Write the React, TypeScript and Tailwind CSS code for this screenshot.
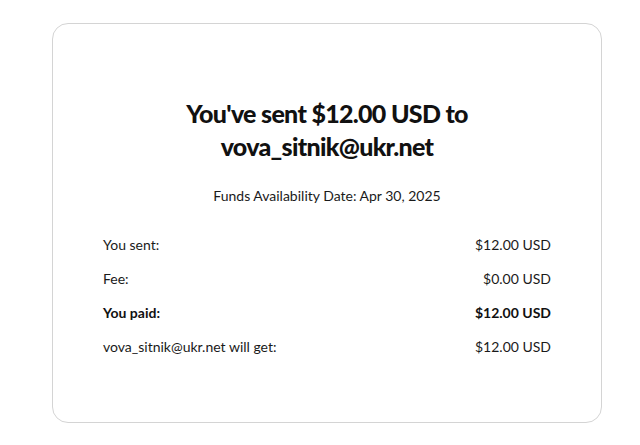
import React from "react";

const rows = [
  { label: "You sent:", value: "$12.00 USD", bold: false },
  { label: "Fee:", value: "$0.00 USD", bold: false },
  { label: "You paid:", value: "$12.00 USD", bold: true },
  { label: "vova_sitnik@ukr.net will get:", value: "$12.00 USD", bold: false },
];

export default function App() {
  return (
    <div className="w-[640px] h-[445px] bg-white pt-[23px] pl-[52px]" style={{ fontFamily: "Lato, 'Open Sans', sans-serif" }}>
      <div className="w-[550px] h-[400px] border border-[#d4d4d4] rounded-[16px] bg-white flex flex-col items-center pt-[73px] px-[50px]">
        <h1 className="text-[25px] leading-[33px] font-black text-[#111] text-center tracking-[-0.7px]">
          You've sent $12.00 USD to
          <br />
          vova_sitnik@ukr.net
        </h1>
        <p className="mt-[23px] text-[14px] leading-[20px] text-[#1a1a1a]">Funds Availability Date: Apr 30, 2025</p>
        <div className="w-full mt-[29px] flex flex-col gap-[14px]">
          {rows.map((r) => (
            <div key={r.label} className={`flex justify-between text-[14px] leading-[20px] text-[#1a1a1a] ${r.bold ? "font-bold text-[#111]" : ""}`}>
              <span>{r.label}</span>
              <span>{r.value}</span>
            </div>
          ))}
        </div>
      </div>
    </div>
  );
}
